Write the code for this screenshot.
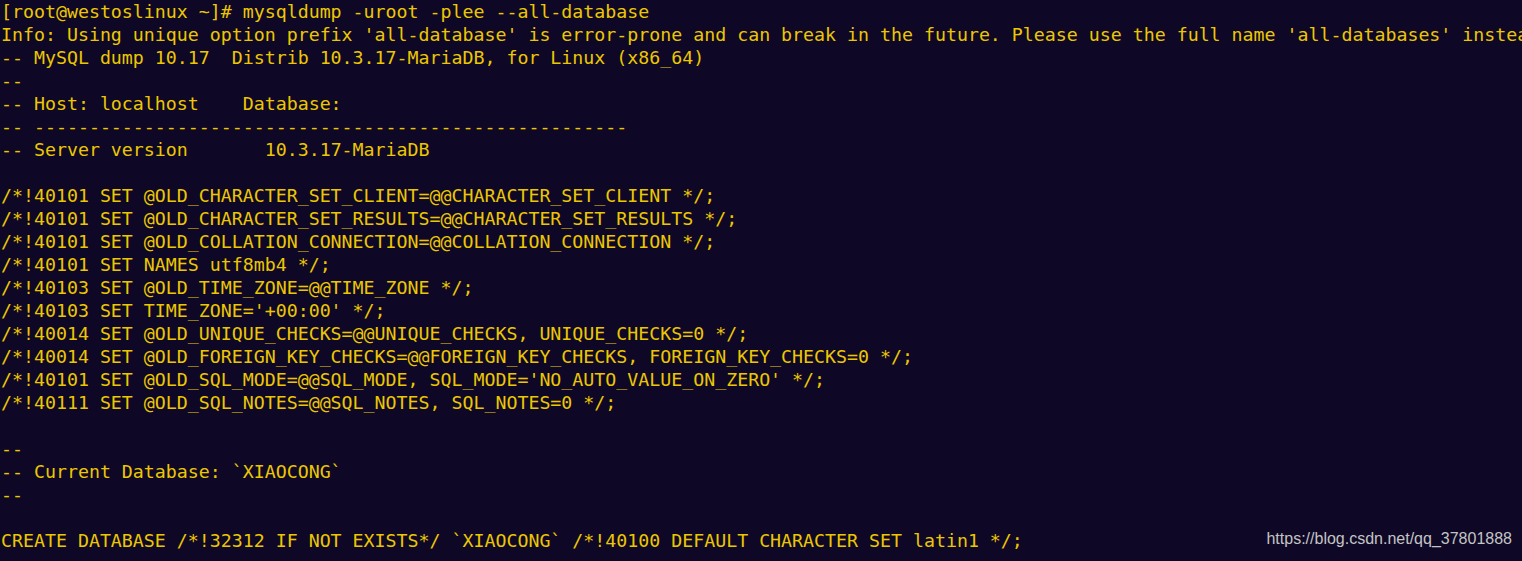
const lines = [
  "[root@westoslinux ~]# mysqldump -uroot -plee --all-database",
  "Info: Using unique option prefix 'all-database' is error-prone and can break in the future. Please use the full name 'all-databases' instead.",
  "-- MySQL dump 10.17  Distrib 10.3.17-MariaDB, for Linux (x86_64)",
  "--",
  "-- Host: localhost    Database: ",
  "-- ------------------------------------------------------",
  "-- Server version\t10.3.17-MariaDB",
  "",
  "/*!40101 SET @OLD_CHARACTER_SET_CLIENT=@@CHARACTER_SET_CLIENT */;",
  "/*!40101 SET @OLD_CHARACTER_SET_RESULTS=@@CHARACTER_SET_RESULTS */;",
  "/*!40101 SET @OLD_COLLATION_CONNECTION=@@COLLATION_CONNECTION */;",
  "/*!40101 SET NAMES utf8mb4 */;",
  "/*!40103 SET @OLD_TIME_ZONE=@@TIME_ZONE */;",
  "/*!40103 SET TIME_ZONE='+00:00' */;",
  "/*!40014 SET @OLD_UNIQUE_CHECKS=@@UNIQUE_CHECKS, UNIQUE_CHECKS=0 */;",
  "/*!40014 SET @OLD_FOREIGN_KEY_CHECKS=@@FOREIGN_KEY_CHECKS, FOREIGN_KEY_CHECKS=0 */;",
  "/*!40101 SET @OLD_SQL_MODE=@@SQL_MODE, SQL_MODE='NO_AUTO_VALUE_ON_ZERO' */;",
  "/*!40111 SET @OLD_SQL_NOTES=@@SQL_NOTES, SQL_NOTES=0 */;",
  "",
  "--",
  "-- Current Database: `XIAOCONG`",
  "--",
  "",
  "CREATE DATABASE /*!32312 IF NOT EXISTS*/ `XIAOCONG` /*!40100 DEFAULT CHARACTER SET latin1 */;",
];

export default function App() {
  return (
    <div className="relative w-[1522px] h-[561px] overflow-hidden bg-[#0e0826]">
      <div
        className="pl-[1px] text-[18.26px] leading-[23px] text-[#ecc700] whitespace-pre [tab-size:8]"
        style={{ fontFamily: '"DejaVu Sans Mono", "Liberation Mono", monospace' }}
      >
        {lines.map((line, i) => (
          <div key={i} className="h-[23px]">
            {line}
          </div>
        ))}
      </div>
      <div
        className="absolute right-[10px] bottom-[10px] text-[16px] text-[#c4c4c4]"
        style={{ fontFamily: '"Liberation Sans", Arial, sans-serif' }}
      >
        https://blog.csdn.net/qq_37801888
      </div>
    </div>
  );
}
